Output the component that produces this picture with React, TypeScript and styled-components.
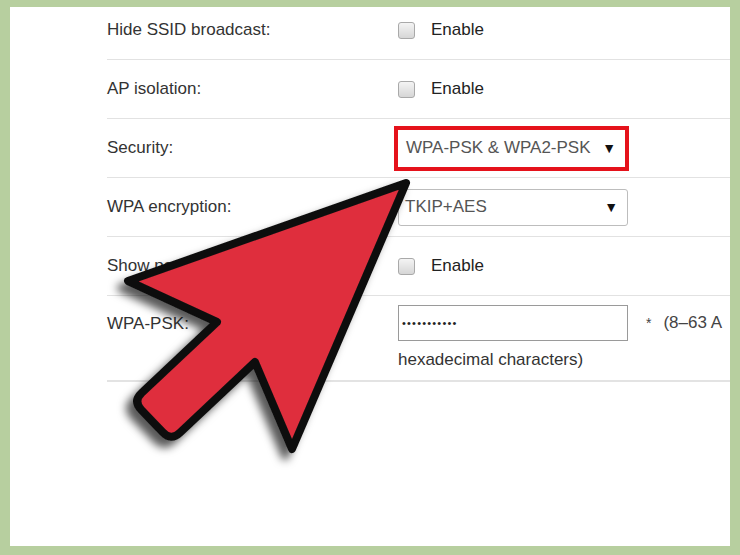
import React, { FC } from 'react';
import styled, { createGlobalStyle } from 'styled-components';

const GlobalStyle = createGlobalStyle`
  html, body {
    margin: 0;
    padding: 0;
    background: #b7cf9f;
  }
  * {
    box-sizing: border-box;
  }
`;

const Frame = styled.div`
  position: relative;
  width: 740px;
  height: 555px;
  padding: 7px 10px 9px 10px;
  font-family: 'Liberation Sans', Arial, sans-serif;
`;

const Panel = styled.div`
  height: 100%;
  background: #fff;
  overflow: hidden;
`;

const Form = styled.div`
  margin-top: -6px;
  margin-left: 97px;
`;

interface RowProps {
  $tall?: boolean;
}

const Row = styled.div<RowProps>`
  display: grid;
  grid-template-columns: 291px 1fr;
  align-items: ${props => (props.$tall ? 'start' : 'center')};
  min-height: ${props => (props.$tall ? '82px' : '59px')};
  padding: ${props => (props.$tall ? '9px 0 10px' : '0')};
  border-bottom: ${props => (props.$tall ? '2px solid #e3e3e3' : '1px solid #e2e2e2')};
`;

const Label = styled.div<RowProps>`
  font-size: 17px;
  color: #333;
  line-height: ${props => (props.$tall ? '38px' : '20px')};
  white-space: nowrap;
`;

const Check = styled.label`
  display: flex;
  align-items: center;
  gap: 16px;
  font-size: 17px;
  color: #222;
`;

const Box = styled.span`
  width: 17px;
  height: 17px;
  border: 1px solid #a9a9a9;
  border-radius: 3px;
  background: linear-gradient(#f4f4f4, #d6d6d6);
  margin-top: 1px;
`;

interface SelectProps {
  $highlight?: boolean;
}

const Select = styled.div<SelectProps>`
  display: flex;
  align-items: center;
  justify-content: space-between;
  width: ${props => (props.$highlight ? '235px' : '230px')};
  height: ${props => (props.$highlight ? '45px' : '37px')};
  margin-left: ${props => (props.$highlight ? '-4px' : '0')};
  padding: ${props => (props.$highlight ? '0 9px 0 8px' : '0 9px 0 6px')};
  border: ${props => (props.$highlight ? '4px solid #e5121b' : '1px solid #bdbdbd')};
  border-radius: ${props => (props.$highlight ? '0' : '3px')};
  font-size: 17px;
  color: #555;
  background: #fff;
`;

const Caret = styled.span`
  font-size: 14px;
  color: #111;
`;

const InputLine = styled.div`
  display: flex;
  align-items: center;
  white-space: nowrap;
`;

const PasswordInput = styled.div`
  width: 230px;
  height: 36px;
  border: 1px solid #9a9a9a;
  padding-left: 3px;
  display: flex;
  align-items: center;
  font-size: 11px;
  letter-spacing: 1.2px;
  color: #222;
`;

const Hint = styled.span`
  margin-left: 18px;
  font-size: 17px;
  color: #444;

  .star {
    margin-right: 12px;
    font-size: 14px;
  }
`;

const HintLine = styled.div`
  margin-top: 9px;
  font-size: 17px;
  line-height: 20px;
  color: #333;
`;

const ArrowLayer = styled.svg`
  position: absolute;
  top: 0;
  left: 0;
  pointer-events: none;
`;

const Checkbox: FC<{ text: string }> = ({ text }) => (
  <Check>
    <Box />
    {text}
  </Check>
);

const Arrow: FC = () => (
  <ArrowLayer width="740" height="555" viewBox="0 0 740 555">
    <defs>
      <filter id="arrowShadow" x="-20%" y="-20%" width="140%" height="140%">
        <feDropShadow dx="-7" dy="7" stdDeviation="4" floodColor="#000" floodOpacity="0.65" />
      </filter>
    </defs>
    <path
      d="M406,183 L128,281 L217,322 L141.7,392.8 Q133,401 141.2,409.7 L162.8,432.3 Q171,441 179.7,432.8 L255,362 L292,449 Z"
      fill="#df2f3e"
      stroke="#111"
      strokeWidth="8"
      strokeLinejoin="round"
      filter="url(#arrowShadow)"
    />
  </ArrowLayer>
);

const App: FC = () => (
  <>
    <GlobalStyle />
    <Frame>
      <Panel>
        <Form>
          <Row>
            <Label>Hide SSID broadcast:</Label>
            <Checkbox text="Enable" />
          </Row>
          <Row>
            <Label>AP isolation:</Label>
            <Checkbox text="Enable" />
          </Row>
          <Row>
            <Label>Security:</Label>
            <Select $highlight>
              WPA-PSK &amp; WPA2-PSK
              <Caret>▼</Caret>
            </Select>
          </Row>
          <Row>
            <Label>WPA encryption:</Label>
            <Select>
              TKIP+AES
              <Caret>▼</Caret>
            </Select>
          </Row>
          <Row>
            <Label>Show password:</Label>
            <Checkbox text="Enable" />
          </Row>
          <Row $tall>
            <Label $tall>WPA-PSK:</Label>
            <div>
              <InputLine>
                <PasswordInput>•••••••••••</PasswordInput>
                <Hint>
                  <span className="star">*</span>(8–63 A
                </Hint>
              </InputLine>
              <HintLine>hexadecimal characters)</HintLine>
            </div>
          </Row>
        </Form>
      </Panel>
      <Arrow />
    </Frame>
  </>
);

export default App;
